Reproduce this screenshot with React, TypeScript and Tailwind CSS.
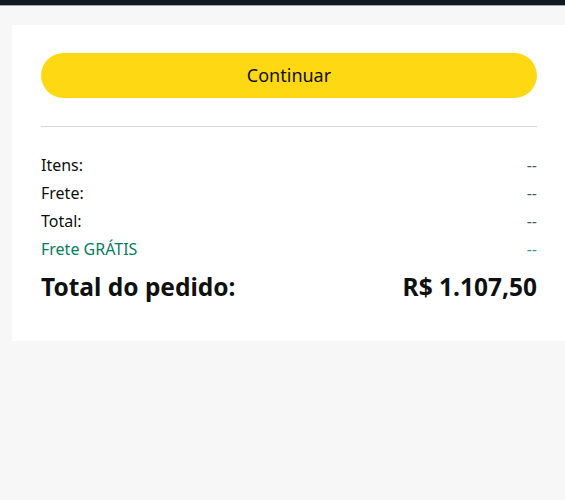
export default function App() {
  const rows = [
    { label: "Itens:", value: "--" },
    { label: "Frete:", value: "--" },
    { label: "Total:", value: "--" },
  ];

  return (
    <div
      className="min-h-[500px] w-[565px] overflow-hidden bg-[#f7f7f7] text-[#0f1111]"
      style={{ fontFamily: "'Noto Sans', Arial, sans-serif" }}
    >
      <div className="h-[5px] bg-[#131921]" />
      <div className="h-px bg-[#a2a6ac]" />
      <div className="ml-3 mt-[19px] w-[554px] bg-white px-[29px] pb-[39px] pt-[28px]">
        <button className="flex h-[45px] w-full items-center justify-center rounded-full bg-[#ffd814] text-[18px] text-[#0f1111]">
          Continuar
        </button>
        <div className="mt-[28px] h-px bg-[#d5d9d9]" />
        <div className="mt-[24px] flex flex-col">
          {rows.map((r) => (
            <div key={r.label} className="flex h-[28px] items-center justify-between text-[16px]">
              <span>{r.label}</span>
              <span className="text-[#565959]">{r.value}</span>
            </div>
          ))}
          <div className="flex h-[28px] items-center justify-between text-[16px] text-[#067d62]">
            <span>Frete GRÁTIS</span>
            <span className="text-[#3f9d85]">--</span>
          </div>
          <div className="mt-[9px] flex items-center justify-between text-[24.5px] font-bold leading-[30px]">
            <span>Total do pedido:</span>
            <span>R$ 1.107,50</span>
          </div>
        </div>
      </div>
    </div>
  );
}
